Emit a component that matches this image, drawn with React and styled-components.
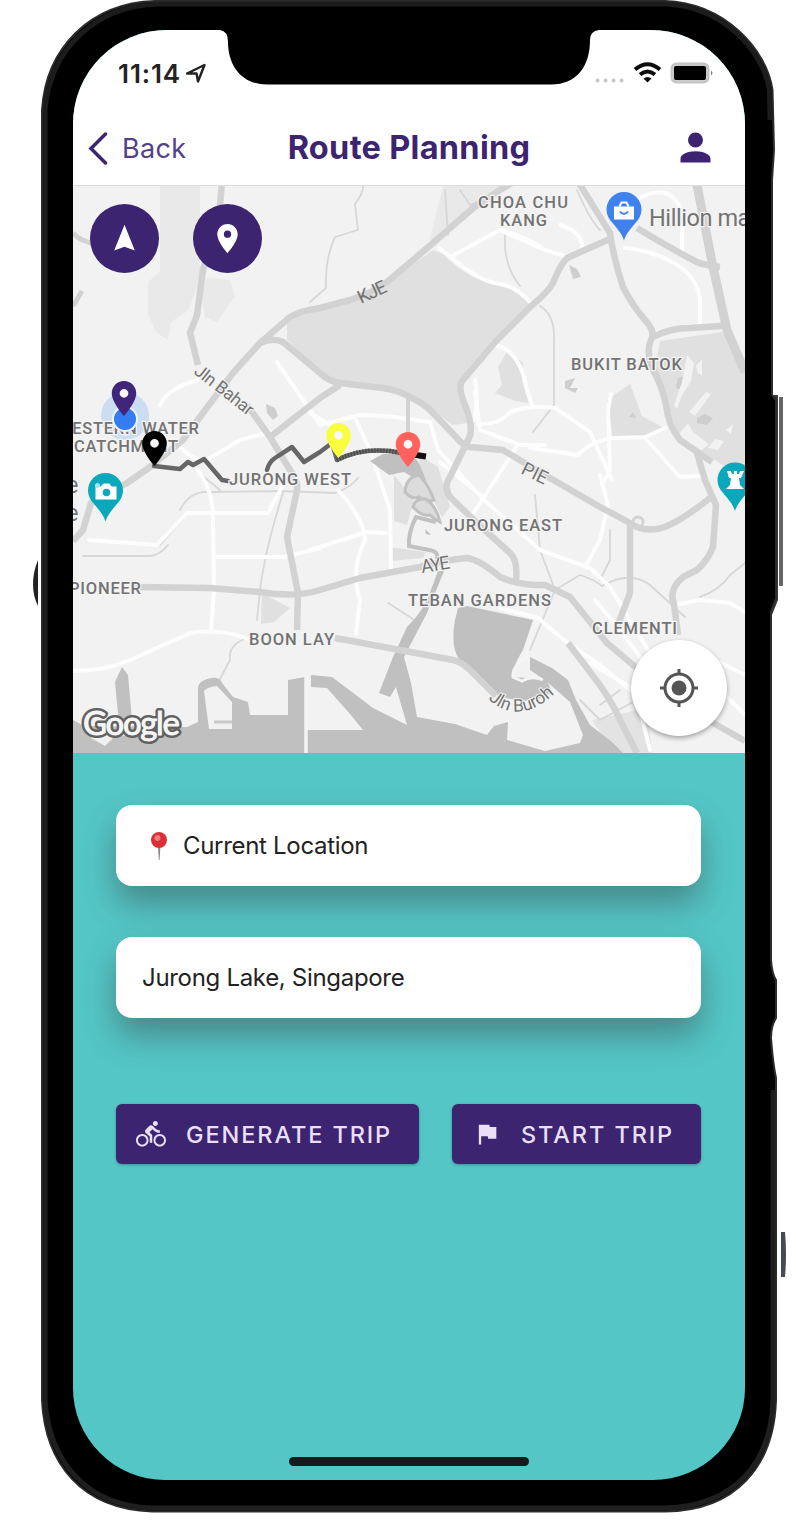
import React from "react";
import styled, { createGlobalStyle } from "styled-components";

const purple = "#3c2470";
const teal = "#54c6c6";

const Global = createGlobalStyle`
  * { box-sizing: border-box; }
  body { margin: 0; background: #fff; font-family: Inter, "Liberation Sans", sans-serif; }
`;

const Stage = styled.main`
  position: relative;
  width: 796px;
  height: 1526px;
  padding: 30px 51px 46px 73px;
  overflow: hidden;
  background: #fff;
`;

const CaseArt = styled.svg`
  position: absolute;
  inset: 0;
`;

const Screen = styled.div`
  position: relative;
  display: flex;
  flex-direction: column;
  width: 672px;
  height: 1450px;
  border-radius: 94px 94px 92px 92px;
  overflow: hidden;
  background: ${teal};
`;

const StatusBar = styled.div`
  display: flex;
  justify-content: space-between;
  height: 80px;
  padding: 30px 32px 0 45px;
  background: #fff;
`;

const StatusGroup = styled.div`
  display: flex;
  align-items: center;
  height: 26px;
  gap: ${(p) => p.$gap}px;
`;

const Clock = styled.span`
  font-size: 26px;
  font-weight: 600;
  letter-spacing: 0.9px;
  color: #222;
`;

const Notch = styled.svg`
  position: absolute;
  left: 147px;
  top: 0;
`;

const NavBar = styled.header`
  display: grid;
  grid-template-columns: 1fr auto 1fr;
  align-items: center;
  height: 76px;
  padding: 0 27px 0 15px;
  border-bottom: 1px solid #dcdcdc;
  background: #fff;
  color: ${purple};
`;

const BackLink = styled.a`
  display: flex;
  align-items: center;
  gap: 14px;
  padding-top: 2px;
  font-size: 27px;
  letter-spacing: 0.3px;
  color: #53408a;
`;

const Title = styled.h1`
  margin: 0 0 0 12px;
  font-size: 32.5px;
  line-height: 40px;
  font-weight: 700;
  letter-spacing: 0.3px;
`;

const NavAction = styled.div`
  display: flex;
  justify-content: flex-end;
`;

const MapPane = styled.section`
  position: relative;
  height: 567px;
  background: #f2f2f2;
`;

const MapSvg = styled.svg`
  display: block;
`;

const RoundButton = styled.button`
  position: absolute;
  display: flex;
  align-items: center;
  justify-content: center;
  padding: 0;
  border: 0;
  border-radius: 50%;
  left: ${(p) => p.$x}px;
  top: ${(p) => p.$y}px;
  width: ${(p) => p.$size}px;
  height: ${(p) => p.$size}px;
  color: ${(p) => (p.$light ? "#555" : "#fff")};
  background: ${(p) => (p.$light ? "#fff" : purple)};
  box-shadow: ${(p) => (p.$light ? "0 2px 5px rgba(0,0,0,.35)" : "none")};
`;

const Panel = styled.section`
  display: flex;
  flex-direction: column;
  flex: 1;
  padding: 52px 44px 14px 43px;
`;

const Field = styled.div`
  display: flex;
  align-items: center;
  height: 81px;
  margin-bottom: 51px;
  padding-left: ${(p) => (p.$icon ? 34 : 26)}px;
  gap: 15px;
  border-radius: 16px;
  background: #fff;
  color: #222;
  font-size: 24px;
  letter-spacing: -0.31px;
  box-shadow: 0 18px 32px rgba(55, 55, 55, 0.42);
`;

const Actions = styled.div`
  display: flex;
  justify-content: space-between;
  margin-top: 35px;
`;

const ActionButton = styled.button`
  display: flex;
  align-items: center;
  width: ${(p) => p.$width}px;
  height: 60px;
  padding: 0 0 0 ${(p) => p.$pad}px;
  gap: ${(p) => p.$gap}px;
  border: 0;
  border-radius: 6px;
  background: ${purple};
  color: #eadff8;
  font-family: inherit;
  font-size: 23.5px;
  font-weight: 500;
  letter-spacing: 1.9px;
  white-space: nowrap;
  box-shadow: 0 1px 3px rgba(0, 0, 0, 0.3);
`;

const HomeIndicator = styled.div`
  width: 240px;
  height: 9px;
  margin: auto auto 0 173px;
  border-radius: 5px;
  background: #141a1e;
`;

const icons = {
  person: "M12 4a4 4 0 1 1 0 8 4 4 0 0 1 0-8zM12 14c4.42 0 8 1.79 8 4v2H4v-2c0-2.21 3.58-4 8-4z",
  arrow: "M12 2 4.500 20.800 12 18l7.500 2.800z",
  place: "M12 2C8.13 2 5 5.13 5 9c0 5.25 7 13 7 13s7-7.75 7-13c0-3.87-3.13-7-7-7zm0 9.5a2.5 2.5 0 1 1 0-5 2.5 2.5 0 0 1 0 5z",
  flag: "M14.4 6 14 4H5v17h2v-7h5.6l.4 2h7V6z",
  bike: "M15.5 5.5c1.1 0 2-.9 2-2s-.9-2-2-2-2 .9-2 2 .9 2 2 2zM5 12c-2.8 0-5 2.2-5 5s2.2 5 5 5 5-2.2 5-5-2.2-5-5-5zm0 8.5c-1.9 0-3.5-1.6-3.5-3.5s1.6-3.5 3.5-3.5 3.5 1.6 3.5 3.5-1.6 3.5-3.5 3.5zm5.8-10 2.4-2.4.8.8c1.3 1.3 3 2.1 5.1 2.1V9c-1.5 0-2.7-.6-3.6-1.5l-1.9-1.9c-.5-.4-1-.6-1.6-.6s-1.1.2-1.4.6L7.8 8.4c-.4.4-.6.9-.6 1.4 0 .6.2 1.1.6 1.4L11 14v5h2v-6.2l-2.2-2.3zM19 12c-2.8 0-5 2.2-5 5s2.2 5 5 5 5-2.2 5-5-2.2-5-5-5zm0 8.5c-1.9 0-3.5-1.6-3.5-3.5s1.6-3.5 3.5-3.5 3.5 1.6 3.5 3.5-1.6 3.5-3.5 3.5z",
};

const Icon = ({ name, size }) => (
  <svg width={size} height={size} viewBox="0 0 24 24" fill="currentColor">
    <path d={icons[name]} />
  </svg>
);

const Pin = ({ x, y, color }) => (
  <g transform={`translate(${x - 21} ${y - 3.5}) scale(1.75)`}>
    <circle cx="12" cy="9" r="3" fill="#f7f7f7" />
    <path d={icons.place} fill={color} />
  </g>
);

const PoiPin = ({ x, y, color, children }) => (
  <g transform={`translate(${x} ${y})`}>
    <path d="M0 31C-2 24-7 19-12 12.700A17.500 17.500 0 1 1 12 12.700C7 19 2 24 0 31z" fill={color} />
    {children}
  </g>
);

const minorRoads = [
  "M73 671Q105 671 130 660T190 633Q225 628 252 641",
  "M89 540L157 545L187 513H268L283 485",
  "M197 470Q213 488 213 520L214 590L211 631",
  "M214 557H285L320 548",
  "M179 445Q195 465 210 458L240 440L270 432",
  "M160 405Q168 388 198 380",
  "M277 362L320 425L360 415Q390 415 428 422",
  "M310 413L330 425M355 418L370 450L390 510L391 570",
  "M338 490Q365 520 365 540Q350 570 360 600L356 634",
  "M310 550L367 532L386 533",
  "M439 248L452 258Q480 282 500 284Q515 286 531 303",
  "M452 256L500 230L545 250L565 256",
  "M500 230Q530 238 545 250M560 225Q582 232 582 246",
  "M625 248Q650 250 672 262Q697 275 700 300V326",
  "M475 380Q479 400 474 420M478 424Q500 425 510 412Q530 405 555 408L590 432L612 480",
  "M495 345Q520 350 527 390L532 405",
  "M530 448L578 455Q592 440 615 438L645 437L665 428",
  "M611 394L608 410L610 470L602 485",
  "M645 438L680 477L700 476",
  "M475 392L480 430L520 445L545 445",
  "M430 422L438 450L484 500L540 550L590 568L610 587L648 650",
  "M440 462L483 497M517 446L484 497M484 497L470 518",
  "M600 475L608 505L600 540L586 565",
  "M674 605L700 600L730 603L745 612",
  "M500 608L538 618L570 645L600 665L630 690",
  "M595 600L620 630L650 670",
  "M680 650L715 660L745 675M720 690L745 715",
  "M590 663L635 690L650 750",
  "M636 200Q670 180 682 212V250",
];

const majorRoads = [
  "M73 541L83 530L91 503L127 483L150 467L183 440L203 413L233 373L260 343L290 317Q300 311 320 308L350 300Q372 293 387 282L433 243L473 208L500 190L512 183",
  "M260 343Q272 337 283 342L320 373Q330 382 340 383L383 388Q400 391 410 397Q425 404 433 413L457 438Q463 446 470 447L503 450L543 474L600 507L630 523Q640 531 657 529Q675 526 710 498",
  "M612 238L567 258Q560 265 553 283Q548 292 530 307L497 340L463 380Q457 386 465 405Q475 430 468 440L450 477Q443 487 450 497L477 523L510 553Q518 560 516 580",
  "M577 180L610 233Q614 260 623 287Q632 305 645 320Q656 332 651 340Q646 350 652 368Q662 385 666 405Q668 425 680 440L712 462",
  "M653 337Q670 328 690 328L722 326",
  "M637 228Q670 248 693 260Q700 265 720 267",
  "M135 587L210 588L260 592Q295 598 320 590L360 578L420 567Q445 560 467 558Q480 560 500 577Q520 586 545 585L570 597L607 643L633 665L713 723L745 741",
  "M222 183L219 215L203 270Q199 300 197 315L190 333L198 365",
  "M247 405L270 437L290 470Q300 482 296 495L287 537L298 593L297 630",
  "M270 437L320 398L340 385",
  "M335 638L400 650L453 660Q463 662 473 673L496 696",
  "M697 453L705 480L716 505L713 547Q708 560 697 570L683 577Q668 590 674 604L678 635",
  "M630 525V593L617 627",
  "M568 643L590 672Q610 697 620 720L637 753",
];

const thinRoads = [
  "M363 185Q364 192 355 204L358 230L335 237Q325 258 326 288L310 302",
  "M505 235Q503 265 520 286",
  "M445 190L448 235M460 190L470 205L490 195",
  "M577 190Q590 220 600 230M540 306Q555 315 554 340V405L533 432",
  "M195 470L220 490M180 510Q190 490 210 492L280 491L335 493Q350 488 358 478",
  "M83 556H150Q160 555 168 545M160 545L187 514",
  "M283 493Q265 550 260 590L257 620",
  "M555 590L580 575Q595 580 602 586Q630 570 650 585L685 617",
  "M530 650L555 590L540 550L535 495",
  "M388 603L413 619",
  "M245 639Q228 645 230 660L219 681",
  "M610 530V560L600 580",
  "M700 597Q720 590 730 575L745 563",
  "M580 700L600 720L633 702M600 705L620 690",
];

const MapArt = () => (
  <MapSvg width="672" height="567" viewBox="73 186 672 567">
    <g fill="#e9e9e9">
      <path d="M160 185h40v95l-12 30-17 12-3 18-12-8-8-18v-32l12-10z" />
      <path d="M207 278l23 2 5 16-18 26-12-5-4-22z" />
      <path d="M443 185h65l-70 56-8-2z" />
    </g>
    <g fill="#e0e0e0">
      <path d="M433 250L443 254Q470 282 500 284Q518 287 530 303L497 340L463 380Q461 390 468 423L453 425L443 418L410 397L383 388L340 383L320 373L287 340V320L350 301L387 282Z" />
      <path d="M660 341L723 332L745 370V480L715 460L678 434Q665 400 655 370z" />
      <path d="M607 400l23-16 12 32 22 12-19 9-32 1z" />
      <path d="M508 350l15 13-1 18 7 22-13-2-21-8 7-8-4-18z" />
      <path d="M262 593l28 15-16 14-13 2z" />
      <path d="M372 465l22 10 20 25-7 25-13-4v-55zM390 547l36 5-3 6-32 3z" />
      <path d="M418 455l20 12 12 40-8 10-20-40z" />
      <path d="M592 720l55-12 5 45h-38z" fill="#e3e3e3" />
    </g>
    <g fill="#cecece">
      <path d="M569 265l8 4 4 8-8 2zM266 404l9 4 3 8-5 4-6-7zM565 381l10-3-5 10 8 0-3 5-10-5zM678 378l6-2-1 14-7-2zM697 418l8-4 8 4-6 7-10-2zM633 412l3 6-7-1z" />
    </g>
    <g fill="#f2f2f2">
      <path d="M687 355l7 8-3 18-9 14-5 14-3-4 8-23zM696 366l6-7v17l-4-3zM706 392l5 2-16 22-6-4zM708 448l7-9 9 2-6 9zM726 430l7-6-2 10z" />
      <path d="M688 423l5 9 16 12-14 12-16-22z" />
    </g>

    <g fill="none" strokeLinecap="round" strokeLinejoin="round">
      <g stroke="#d7d7d7" strokeWidth="1.8">
        {thinRoads.map((d) => <path key={d} d={d} />)}
      </g>
      <g stroke="#fdfdfd" strokeWidth="4">
        {minorRoads.map((d) => <path key={d} d={d} />)}
      </g>
    </g>

    <g fill="#c0c0c0">
      <path d="M73 720L84 726L187 727L198 722V690Q197 680 212 678Q220 677 222 683L233 697L248 702L250 715H288V680L305 677V730H363L350 714L327 688L311 687V675L332 677L373 708L407 725L396 687L390 697L379 693L393 657L407 627Q425 610 432 587L438 571H444L427 613L404 657L411 683L417 717L455 724L487 735L494 726L508 722L507 740L545 751L580 743L583 735L570 702L545 680L530 670V657L552 668L568 680L576 700L590 725L612 742L623 753H73z" />
      <path d="M115 682l7-15 6 8 4 45-13 4z" />
      <path d="M458 608L467 606L533 620L523 650Q512 667 513 677L545 679Q555 690 545 697Q520 706 493 693L460 660Q450 648 455 620z" />
      <path d="M370 461l13-7 28-1 8 10 7 17-12-2-10-6-15 3z" />
    </g>
    <path d="M204 691Q207 687 217 686L232 702V729H209z" fill="#f2f2f2" />
    <path d="M214 722h18" stroke="#c8c8c8" strokeWidth="3" />
    <path d="M91 738l8-8h22l4 6-9-1-11 11z" fill="#f0f0f0" />
    <path d="M306 675v78" stroke="#f4f4f4" strokeWidth="3.5" />
    <path d="M537 620Q528 642 526 658Q512 666 513 677L522 681Q532 675 543 680" fill="none" stroke="#f5f5f5" strokeWidth="3" />
    <g fill="#dcdcdc" stroke="#c1c1c1" strokeWidth="3">
      <path d="M405 492q1-15 14-17 9 9 15 25-8 3-15-3-7 3-14-5z" />
      <path d="M413 507q2-9 13-8 11 8 14 23-6-3-10-7-8 2-17-8z" />
      <path d="M436 522l-20-5q-8 16-7 29l20 4q10 1 8 9" fill="none" strokeWidth="4" />
    </g>
    <path d="M425 529l6 6-5-1z" fill="#bbb" />

    <g fill="none" stroke="#d2d2d2" strokeWidth="6.5" strokeLinejoin="round">
      {majorRoads.map((d) => <path key={d} d={d} />)}
      <path d="M697 185L713 267L727 330L745 372" strokeWidth="9" />
      <path d="M73 233Q80 241 92 243M73 306L82 291" strokeWidth="5" />
      <path d="M408 398V434" strokeWidth="4" />
      <circle cx="638" cy="522" r="5" strokeWidth="3" />
    </g>

    <g fill="none" stroke="#666" strokeWidth="4.5" strokeLinejoin="round" strokeLinecap="round">
      <path d="M154 466L180 469L188 462L193 465L204 459L222 480L228 481" />
      <path d="M267 470Q269 462 275 458L292 447L304 462L320 452L332 443L337 460Q360 448 390 451L420 456" />
      <path d="M337 460Q360 448 390 451L420 456" stroke="#444" strokeDasharray="1 2" strokeLinecap="butt" />
      <path d="M416 455l7 1" stroke="#111" strokeWidth="6" strokeLinecap="square" />
    </g>

    <circle cx="125" cy="416" r="24" fill="#8db8f0" opacity=".38" />

    <MapLabels />

    <circle cx="125" cy="419" r="13" fill="#eef4ff" />
    <circle cx="125" cy="419" r="11" fill="#347df0" />
    <Pin x={124} y={381} color="#40257a" />
    <Pin x={154.500} y={431} color="#000" />
    <Pin x={338.500} y={423} color="#faff3d" />
    <Pin x={408} y={432} color="#ff625d" />

    <PoiPin x={624} y={209.500} color="#3f82ec">
      <path d="M-10-3h20v13h-20z" fill="#fff" />
      <path d="M-4.500-3l2-4h5l2 4" fill="none" stroke="#fff" strokeWidth="2" />
      <path d="M-4 2Q0 7 4 2" fill="none" stroke="#3f82ec" strokeWidth="2" />
    </PoiPin>
    <PoiPin x={105.500} y={490.500} color="#0ba7bb">
      <path d="M-10-4h5l3-3h6l2 3h5v13h-21z" fill="#fff" />
      <circle cx="1" cy="2" r="3.800" fill="#0ba7bb" />
      <circle cx="-8" cy="-5" r="2.500" fill="#9ce8f0" />
    </PoiPin>
    <PoiPin x={735} y={480} color="#0ba7bb">
      <path d="M-8-9h4l1 3h2v-3h3v3h2l1-3h4l-3 7h-2l1 7 4 4h-18l4-4 1-7h-2z" fill="#fff" />
    </PoiPin>
  </MapSvg>
);

const labels = [
  ["CHOA CHU", 478, 208, 90],
  ["KANG", 500, 226, 47],
  ["BUKIT BATOK", 571, 370, 111],
  ["CATCHMENT", 74, 452, 104],
  ["JURONG WEST", 229, 485, 122],
  ["JURONG EAST", 444, 531, 118],
  ["TEBAN GARDENS", 408, 606, 143],
  ["BOON LAY", 249, 645, 85],
  ["CLEMENTI", 592, 634, 85],
  ["PIONEER", 69, 594, 72],
  ["WESTERN WATER", 57, 434, 142],
];

const MapLabels = () => (
  <g
    fontFamily="Roboto, Inter, sans-serif"
    fontSize="16.500"
    fontWeight="500"
    fill="#737373"
    stroke="#f4f4f4"
    strokeWidth="2.500"
    paintOrder="stroke"
  >
    {labels.map(([t, x, y, w]) => (
      <text key={t} x={x} y={y} textLength={w}>{t}</text>
    ))}
    <g fontWeight="400" fontSize="18.500" strokeWidth="2">
      <text transform="translate(361 304) rotate(-25)" textLength="30" strokeWidth="0">KJE</text>
      <text transform="translate(520 473) rotate(26)" textLength="27">PIE</text>
      <text transform="translate(422 573) rotate(-9)" textLength="29">AYE</text>
      <text transform="translate(193 373) rotate(38)" fontSize="17.500" textLength="70">Jln Bahar</text>
      <path id="buroh" d="M488 699Q522 729 560 688" fill="none" stroke="none" />
      <text fontSize="17.500"><textPath href="#buroh" textLength="75">Jln Buroh</textPath></text>
    </g>
    <g fontWeight="400" fontSize="23.500">
      <text x="649" y="226" textLength="112">Hillion mall</text>
      <text x="66" y="493">e</text>
      <text x="66" y="521">e</text>
    </g>
    <text x="83" y="735" textLength="97" fontFamily="Lato, sans-serif" fontWeight="400" fontSize="33" fill="#f5f5f5" stroke="#626262" strokeWidth="6" strokeLinejoin="round">Google</text>
    <text x="83" y="735" textLength="97" aria-hidden="true" fontFamily="Lato, sans-serif" fontWeight="400" fontSize="33" fill="#f5f5f5" stroke="#f5f5f5" strokeWidth="0.8">Google</text>
  </g>
);

const PhoneCase = () => (
  <CaseArt width="796" height="1526">
    <path d="M38 560Q33 572 33 584T38 606z" fill="#222" />
    <path d="M773 395h5v205l-6 15z" fill="#3a3a3a" />
    <path d="M779 397h4v189h-4z" fill="#666" />
    <path d="M781 1232h4q2 22 0 45h-4z" fill="#454958" />
    <path
      d="M155 1H665C725 3 767 50 772.500 90L773 110L774 150L772 180V395L776 400V598L771 612V960Q772 974 776 980V1018Q771 1026 771 1038Q773 1064 776 1078V1400C774 1466 736 1511 665 1511.500H152C82 1509 45 1464 42 1400V110C46 48 90 3 155 1z"
      fill="#000"
      stroke="#2c2c2c"
      strokeWidth="2"
    />
    <path d="M45 1400V110C50 50 94 6 158 4H665C722 6 763 50 769.500 90L770 120" fill="none" stroke="#1c1c1c" strokeWidth="5" />
    <path d="M45 1400C49 1460 85 1506 152 1508H665C734 1506 771 1464 773 1400V1090" fill="none" stroke="#1f1f1f" strokeWidth="5" />
  </CaseArt>
);

export default function App() {
  return (
    <Stage>
      <Global />
      <PhoneCase />
      <Screen>
        <StatusBar>
          <StatusGroup $gap={5}>
            <Clock>11:14</Clock>
            <svg width="20" height="20" viewBox="0 0 20 20">
              <path d="M1 10.500L18.500 2L12 18.500L10.500 10.500z" fill="none" stroke="#222" strokeWidth="2.400" strokeLinejoin="round" />
            </svg>
          </StatusGroup>
          <StatusGroup $gap={8}>
            <svg width="31" height="26">
              {[3.5, 11.5, 19.5, 27.5].map((x) => <circle key={x} cx={x} cy="20.500" r="2" fill="#c8c8c8" />)}
            </svg>
            <svg width="29" height="24" viewBox="0 0 29 24" fill="none" stroke="#0c0c0c" strokeWidth="4">
              <path d="M2 8.500Q14.500-2 27 8.500M7 13.500Q14.500 7.500 22 13.500" />
              <path d="M14.500 21.500L10.500 17.500Q14.500 14.500 18.500 17.500z" fill="#0c0c0c" stroke="none" />
            </svg>
            <svg width="43" height="24">
              <rect x="1.500" y="2.500" width="37" height="19" rx="5" fill="#ccc" stroke="#c4c4c4" strokeWidth="2" />
              <rect x="4" y="5" width="32" height="14" rx="2" fill="#000" />
              <path d="M41 9.500q3 2.500 0 5z" fill="#777" />
            </svg>
          </StatusGroup>
        </StatusBar>
        <Notch width="380" height="56" viewBox="0 0 380 56">
          <path d="M0 0H379Q370 1 370 10C370 36 357 54.500 331 54.500H47C22 54.500 8 36 8 12Q8 1 0 0z" fill="#000" />
        </Notch>
        <NavBar>
          <BackLink>
            <svg width="20" height="34" viewBox="0 0 20 34">
              <path d="M17.500 2L3 16.500L17.500 31" fill="none" stroke={purple} strokeWidth="3.500" strokeLinecap="round" />
            </svg>
            Back
          </BackLink>
          <Title>Route Planning</Title>
          <NavAction><Icon name="person" size={45} /></NavAction>
        </NavBar>
        <MapPane>
          <MapArt />
          <RoundButton $x={17} $y={18} $size={69}><Icon name="arrow" size={33} /></RoundButton>
          <RoundButton $x={120} $y={18} $size={69}><Icon name="place" size={35} /></RoundButton>
          <RoundButton $x={558} $y={454} $size={96} $light>
            <svg width="40" height="40" viewBox="-20 -20 40 40">
              <circle r="7.500" fill="#555" />
              <circle r="14" fill="none" stroke="#555" strokeWidth="3" />
              <path d="M0-19V-14M0 19V14M-19 0H-14M19 0H14" stroke="#555" strokeWidth="3" />
            </svg>
          </RoundButton>
        </MapPane>
        <Panel>
          <Field $icon>
            <svg width="18" height="30" viewBox="0 0 18 30">
              <path d="M8 15h2.400l-.8 14h-.8z" fill="#8c8585" />
              <circle cx="9" cy="9" r="8" fill="#d92f36" />
              <circle cx="7.500" cy="7" r="3" fill="#ee7c78" />
            </svg>
            Current Location
          </Field>
          <Field>Jurong Lake, Singapore</Field>
          <Actions>
            <ActionButton $width={303} $pad={20} $gap={20}><Icon name="bike" size={30} />GENERATE TRIP</ActionButton>
            <ActionButton $width={249} $pad={21} $gap={20}><Icon name="flag" size={28} />START TRIP</ActionButton>
          </Actions>
          <HomeIndicator />
        </Panel>
      </Screen>
    </Stage>
  );
}
